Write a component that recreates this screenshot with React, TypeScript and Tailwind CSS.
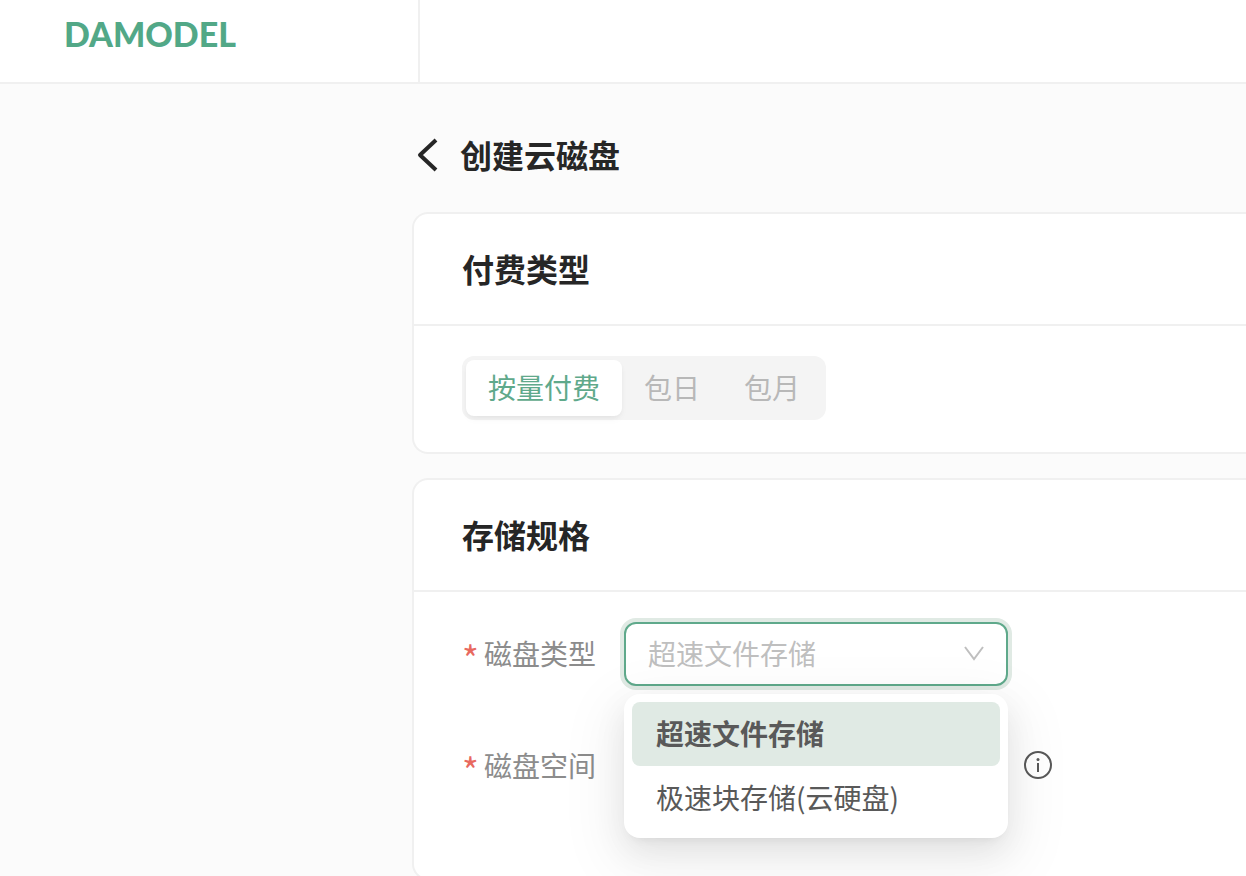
import { useState } from "react";
import type { ReactNode } from "react";

const payTypes = ["按量付费", "包日", "包月"];
const diskTypes = ["超速文件存储", "极速块存储(云硬盘)"];

function Card({ title, children }: { title: string; children: ReactNode }) {
  return (
    <section className="rounded-l-2xl border-2 border-r-0 border-[#f0f0f0] bg-white">
      <h2 className="border-b-2 border-[#f0f0f0] px-12 pt-[30px] pb-8 text-[32px] leading-12 font-bold text-[#262626]">
        {title}
      </h2>
      <div className="px-12 pt-[30px] pb-8">{children}</div>
    </section>
  );
}

function FieldLabel({ htmlFor, text }: { htmlFor: string; text: string }) {
  return (
    <label htmlFor={htmlFor} className="flex w-[162px] shrink-0 items-center gap-2 pb-0.5 text-[28px] leading-10 text-[#8c8c8c]">
      <span className="w-[14px] pt-2 text-[36px] leading-10 text-[#e8695f]" aria-hidden="true">*</span>
      {text}
    </label>
  );
}

export default function App() {
  const [pay, setPay] = useState(payTypes[0]);
  const [disk, setDisk] = useState(diskTypes[0]);
  const [size, setSize] = useState("");

  return (
    <div className="min-h-screen overflow-hidden bg-[#fbfbfb] font-['Noto_Sans_CJK_SC','Liberation_Sans',sans-serif]">
      <header className="flex h-[84px] border-b-2 border-[#f0f0f0] bg-white">
        <div className="w-[420px] shrink-0 border-r-2 border-[#f0f0f0] px-16 pt-[10px]">
          <a href="#" className="block font-[Lato] text-[34px] leading-12 font-black text-[#52a887]">
            DAMODEL
          </a>
        </div>
      </header>

      <main className="ml-[412px] pt-12">
        <div className="flex h-12 items-center gap-5">
          <button type="button" aria-label="返回" className="pl-1">
            <svg className="h-8 w-6 overflow-visible" viewBox="0 0 24 32" fill="none" stroke="#262626" strokeWidth="4">
              <path d="M20 0 4 15 20 30" strokeLinejoin="round" />
            </svg>
          </button>
          <h1 className="pb-1 text-[32px] leading-12 font-bold text-[#262626]">创建云磁盘</h1>
        </div>

        <div className="mt-8 flex flex-col gap-6">
          <Card title="付费类型">
            <div className="inline-flex rounded-xl bg-[#f4f4f4] p-1 align-top" role="group" aria-label="付费类型">
              {payTypes.map((item) => (
                <button
                  key={item}
                  type="button"
                  aria-pressed={item === pay}
                  onClick={() => setPay(item)}
                  className={
                    item === pay
                      ? "h-14 rounded-lg bg-white px-[22px] pb-0.5 text-[28px] leading-10 text-[#5fa98b] shadow-[0_4px_8px_-2px_rgba(0,0,0,0.05),0_2px_4px_rgba(0,0,0,0.03)]"
                      : "h-14 rounded-lg px-[22px] pb-0.5 text-[28px] leading-10 text-[#b8b8b8]"
                  }
                >
                  {item}
                </button>
              ))}
            </div>
          </Card>

          <Card title="存储规格">
            <div className="flex flex-col gap-12 pb-12">
              <div className="flex items-center">
                <FieldLabel htmlFor="disk-type" text="磁盘类型" />
                <div className="relative w-96">
                  <select
                    id="disk-type"
                    value={disk}
                    onChange={(e) => setDisk(e.target.value)}
                    className="h-16 w-full appearance-none rounded-xl border-2 border-[#5fa98b] bg-white px-[22px] pb-0.5 text-[28px] text-[#bfbfbf] shadow-[0_0_0_4px_#e0eae4] outline-none"
                  >
                    {diskTypes.map((item) => (
                      <option key={item}>{item}</option>
                    ))}
                  </select>
                  <svg
                    className="pointer-events-none absolute top-6 right-6 h-4 w-5"
                    viewBox="0 0 20 16"
                    fill="none"
                    stroke="#bfbfbf"
                    strokeWidth="2"
                  >
                    <path d="M1 1 10 13 19 1" />
                  </svg>
                  <div
                    role="listbox"
                    aria-label="磁盘类型"
                    className="absolute top-[72px] left-0 z-10 w-full rounded-2xl bg-white p-2 shadow-[0_12px_32px_0_rgba(0,0,0,0.08),0_6px_12px_-8px_rgba(0,0,0,0.12),0_18px_56px_16px_rgba(0,0,0,0.05)]"
                  >
                    {diskTypes.map((item) => (
                      <button
                        key={item}
                        type="button"
                        role="option"
                        aria-selected={item === disk}
                        onClick={() => setDisk(item)}
                        className={
                          item === disk
                            ? "block h-16 w-full rounded-lg bg-[#e0eae4] px-6 pb-0.5 text-left text-[28px] leading-10 font-bold text-[#595959]"
                            : "block h-16 w-full rounded-lg px-6 pb-0.5 text-left text-[28px] leading-10 text-[#595959]"
                        }
                      >
                        {item}
                      </button>
                    ))}
                  </div>
                </div>
              </div>

              <div className="flex items-center">
                <FieldLabel htmlFor="disk-size" text="磁盘空间" />
                <input
                  id="disk-size"
                  type="number"
                  value={size}
                  onChange={(e) => setSize(e.target.value)}
                  className="h-16 w-96 rounded-xl border-2 border-[#d9d9d9] bg-white px-[22px] text-[28px] text-[#595959]"
                />
                <svg className="ml-4 h-7 w-7 overflow-visible" viewBox="0 0 28 28" fill="none" stroke="#595959" strokeWidth="2">
                  <circle cx="14" cy="13" r="13" />
                  <path d="M14 11v9" />
                  <circle cx="14" cy="7.5" r="1.5" fill="#595959" stroke="none" />
                </svg>
              </div>
            </div>
          </Card>
        </div>
      </main>
    </div>
  );
}
